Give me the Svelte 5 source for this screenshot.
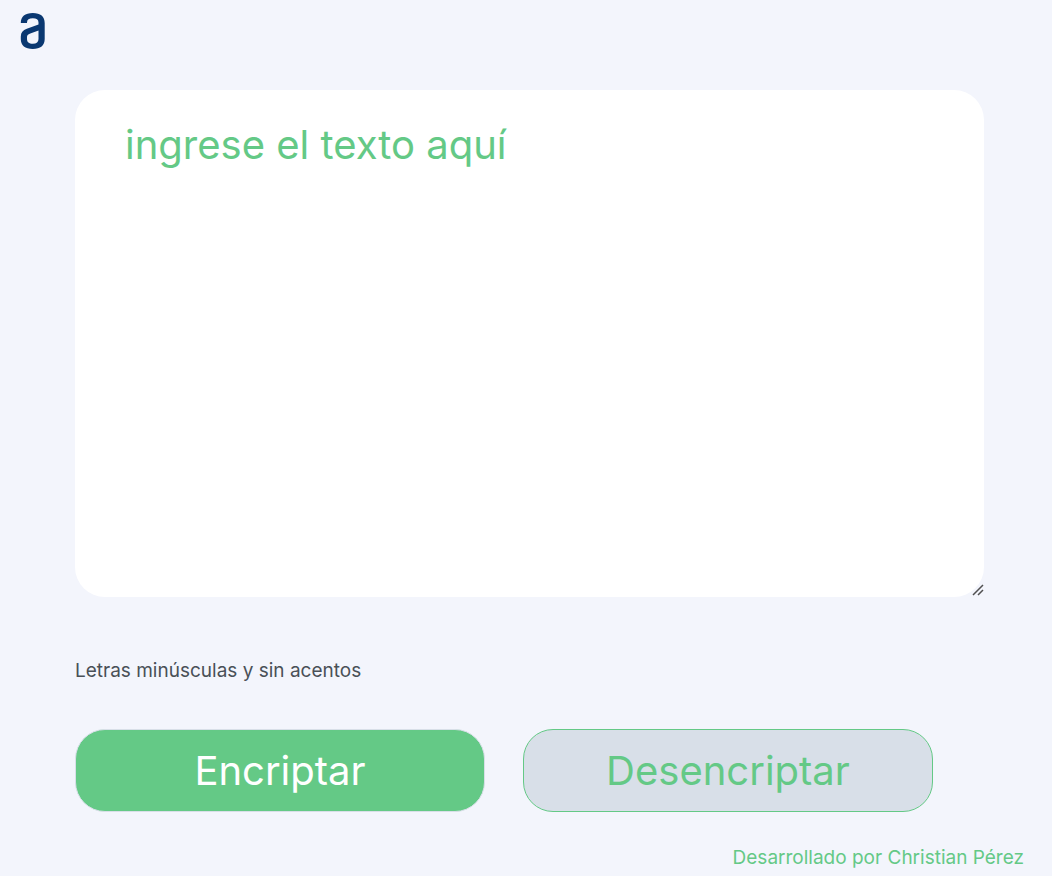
<script>
  let text = $state('');
  const pairs = [['e', 'enter'], ['i', 'imes'], ['a', 'ai'], ['o', 'ober'], ['u', 'ufat']];
  const encrypt = () => {
    text = text.replace(/[eiaou]/g, (c) => pairs.find(([k]) => k === c)[1]);
  };
  const decrypt = () => {
    for (const [k, v] of pairs) text = text.replaceAll(v, k);
  };
</script>

<div class="page">
  <header>
    <svg class="logo" viewBox="0 0 25 36" role="img" aria-label="Alura">
      <path fill-rule="evenodd" d="M.8 10C.8 3.500 5 0 12.800 0s11.900 3.500 11.900 10v16c0 6.500-4.200 10-11.900 10S.8 32.500 .8 26v-2.500c0-4 2-6.300 6-7.800l11.700-4.200V9.500c0-2.800-2-4.200-5.700-4.200S7 6.700 7 9.500v.5zM18.500 17.500l-8.200 3C7.800 21.400 7 22.300 7 24.200v1.800c0 3.200 2 4.700 5.800 4.700s5.700-1.500 5.700-4.700z" />
    </svg>
  </header>
  <main>
    <textarea bind:value={text} aria-label="Texto" placeholder="ingrese el texto aquí"></textarea>
    <p class="note">Letras minúsculas y sin acentos</p>
    <div class="actions">
      <button class="primary" type="button" onclick={encrypt}>Encriptar</button>
      <button class="secondary" type="button" onclick={decrypt}>Desencriptar</button>
    </div>
  </main>
  <footer>Desarrollado por Christian Pérez</footer>
</div>

<style>
  :global(body) {
    margin: 0;
    background: #f3f5fc;
  }
  .page {
    box-sizing: border-box;
    min-height: 100vh;
    display: flex;
    flex-direction: column;
    font-family: Inter, sans-serif;
  }
  header {
    padding: 13px 20px 0;
  }
  .logo {
    display: block;
    width: 25px;
    height: 36px;
    fill: #0a3871;
  }
  main {
    flex: 1;
    display: flex;
    flex-direction: column;
    padding: 41px 68px 0 75px;
  }
  textarea {
    box-sizing: border-box;
    width: 100%;
    height: 507px;
    padding: 30px 50px;
    border: 0;
    border-radius: 30px;
    background: #fff;
    color: #64c986;
    font: 400 40px/50px Inter, sans-serif;
    resize: both;
    outline: none;
  }
  textarea::placeholder {
    color: #64c986;
    opacity: 1;
  }
  textarea::-webkit-resizer {
    background: url("data:image/svg+xml,%3Csvg xmlns='http://www.w3.org/2000/svg' width='15' height='15'%3E%3Cpath d='M4 13L14 3M9 13L14 8' stroke='%23505050' stroke-width='1.5'/%3E%3C/svg%3E") right bottom no-repeat;
  }
  .note {
    margin: 62px 0 0;
    color: #495057;
    font-size: 19px;
    line-height: 24px;
  }
  .actions {
    display: grid;
    grid-template-columns: 1fr 1fr;
    gap: 38px;
    margin: 46px 51px 0 0;
  }
  button {
    height: 83px;
    padding: 0;
    border: 1px solid #d8dfe8;
    border-radius: 30px;
    font: 400 40px/48px Inter, sans-serif;
    cursor: pointer;
  }
  .primary {
    background: #64c986;
    color: #fff;
  }
  .secondary {
    background: #d8dfe8;
    border-color: #64c986;
    color: #64c986;
  }
  footer {
    padding: 34px 28px 7px;
    text-align: right;
    color: #64c986;
    font-size: 19px;
    line-height: 24px;
  }
</style>
